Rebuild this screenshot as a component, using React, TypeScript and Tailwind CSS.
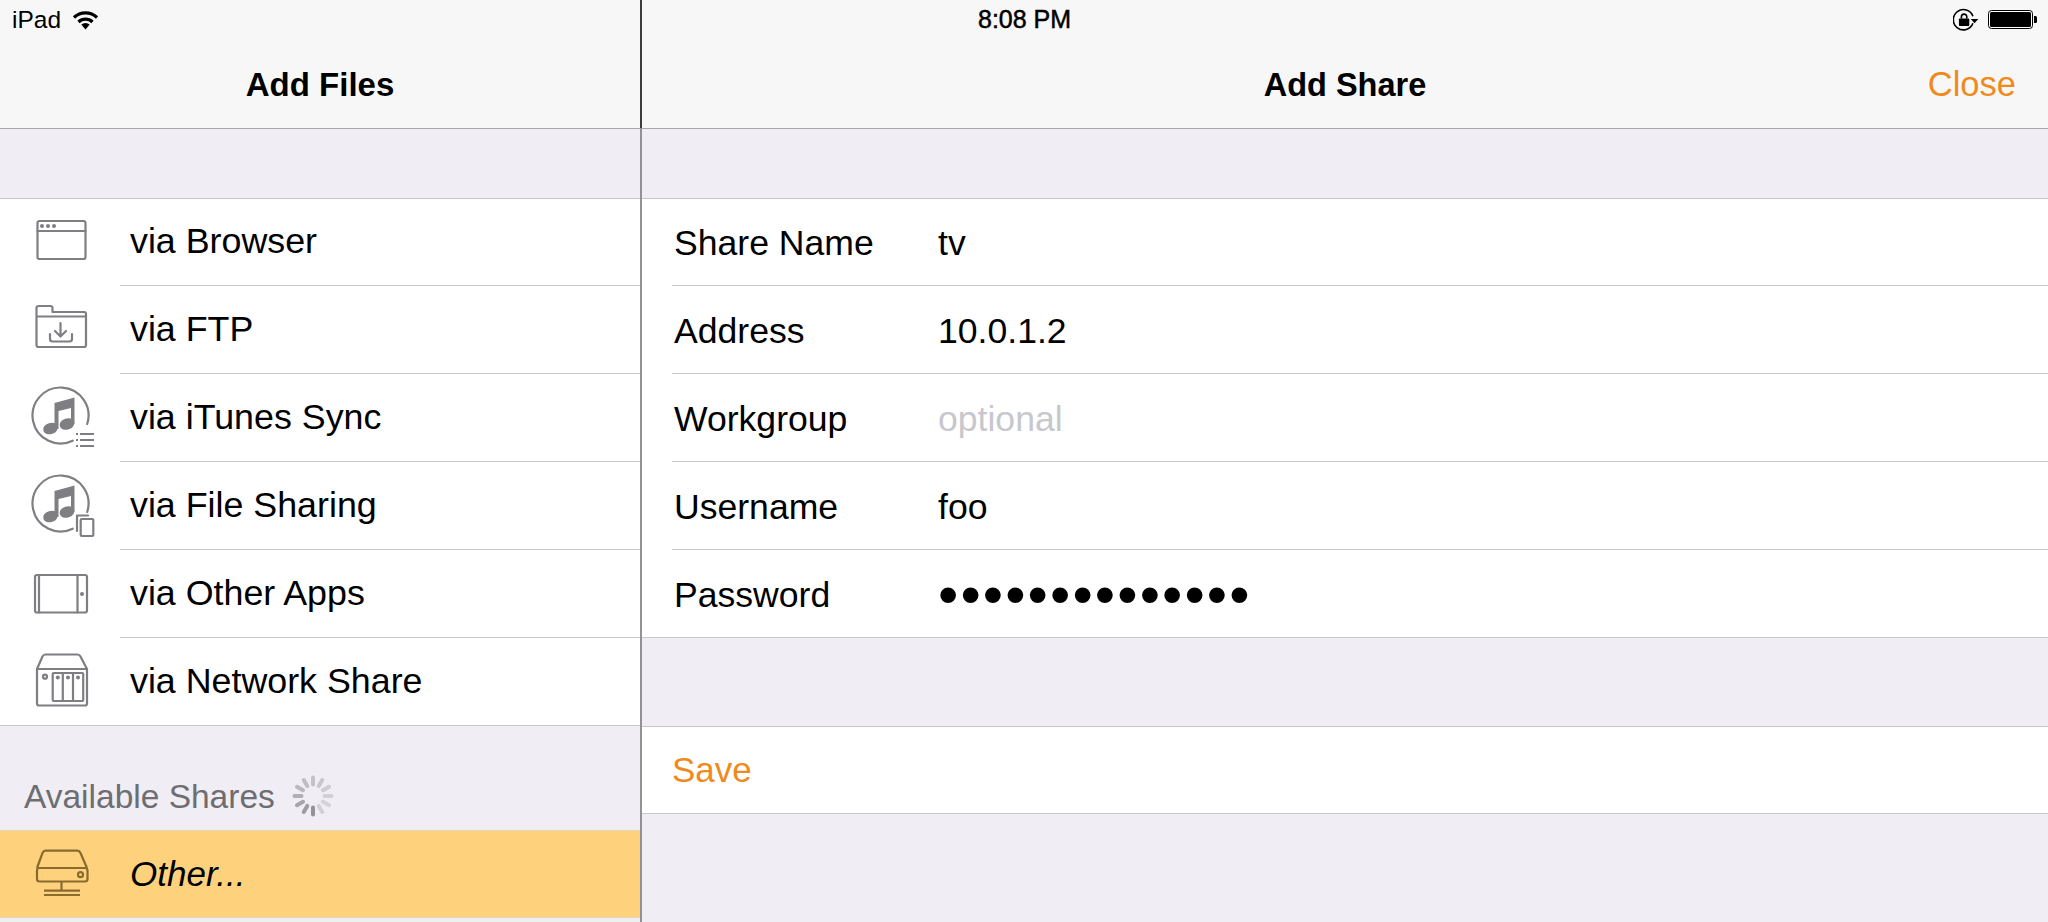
const font = "font-['Liberation_Sans',Arial,sans-serif]";

const iconStroke = {
  fill: "none",
  stroke: "#7f7f83",
  strokeWidth: 2.2,
  strokeLinecap: "round" as const,
  strokeLinejoin: "round" as const,
};

function IconBox({ children }: { children: React.ReactNode }) {
  return (
    <svg width="72" height="64" viewBox="0 0 72 64" className="shrink-0">
      {children}
    </svg>
  );
}

function BrowserIcon() {
  return (
    <IconBox>
      <g {...iconStroke}>
        <rect x="11.5" y="10" width="48" height="38" rx="2" />
        <path d="M11.5 20h48" />
      </g>
      <g fill="#7f7f83">
        <circle cx="16" cy="15" r="2" />
        <circle cx="22" cy="15" r="2" />
        <circle cx="28" cy="15" r="2" />
      </g>
    </IconBox>
  );
}

function FolderIcon() {
  return (
    <IconBox>
      <g {...iconStroke}>
        <path d="M10.5 18.5V10q0-2 2-2h12q2 0 2 2v4H58q2 0 2 2v31q0 2-2 2H12.5q-2 0-2-2V18.5H60" />
        <path d="M34.5 25v13M29 33l5.5 5.5L40 33" />
        <path d="M24 36v5q0 2.5 2.5 2.5h17q2.5 0 2.5-2.5v-5" />
      </g>
    </IconBox>
  );
}

function Note() {
  return (
    <g fill="#7f7f83">
      <path d="M28.5 17 48.5 11.5V38h-3.5V22L32.5 25V43h-4z" />
      <ellipse cx="24.5" cy="42.5" rx="7.5" ry="5.6" transform="rotate(-18 24.5 42.5)" />
      <ellipse cx="41" cy="38" rx="7.5" ry="5.6" transform="rotate(-18 41 38)" />
    </g>
  );
}

function ITunesIcon() {
  return (
    <IconBox>
      <path d="M61.2 38A28 28 0 1 0 46.7 54.7" {...iconStroke} />
      <Note />
      <g stroke="#7f7f83" strokeWidth="1.8">
        <path d="M50 48h2M50 54h2M50 60h2M54 48h14M54 54h14M54 60h14" />
      </g>
    </IconBox>
  );
}

function FileSharingIcon() {
  return (
    <IconBox>
      <path d="M61.2 38A28 28 0 1 0 46.7 54.7" {...iconStroke} />
      <Note />
      <g {...iconStroke}>
        <path d="M51 57V41.5H62" />
        <rect x="54.7" y="45" width="12.6" height="17" rx="1" />
      </g>
    </IconBox>
  );
}

function TabletIcon() {
  return (
    <IconBox>
      <g {...iconStroke}>
        <rect x="9" y="13" width="52" height="37.5" rx="2" />
        <path d="M13 13v37.5M51.5 13v37.5" />
      </g>
      <circle cx="56" cy="32" r="2" fill="#7f7f83" />
    </IconBox>
  );
}

function NasIcon() {
  return (
    <IconBox>
      <g {...iconStroke}>
        <path d="M11 19 16.5 6.5q1-2 3-2h32q2 0 3 2L61 19v34.5q0 2-2 2H13q-2 0-2-2z" />
        <path d="M11 19h50" />
        <rect x="26.7" y="23" width="30.5" height="28" rx="1" />
        <path d="M36.8 23v28M47 23v28" />
        <circle cx="19" cy="26.7" r="2" />
      </g>
      <g fill="#7f7f83">
        <circle cx="31.8" cy="27.5" r="2" />
        <circle cx="42" cy="27.5" r="2" />
        <circle cx="52" cy="27.5" r="2" />
      </g>
    </IconBox>
  );
}

function DiskIcon() {
  return (
    <IconBox>
      <g fill="none" stroke="#8a6b2f" strokeWidth="2.2" strokeLinejoin="round">
        <path d="M11 26 16.5 11q1-2.3 3-2.3h32q2 0 3 2.3L61 26" />
        <rect x="11" y="26" width="50.5" height="13.5" rx="2.5" />
        <circle cx="54.5" cy="32.7" r="2.5" />
        <path d="M35.5 39.5v9M18 48.7h36M18 53h36" />
      </g>
    </IconBox>
  );
}

function Spinner() {
  const ticks = [0.45, 0.4, 0.35, 0.3, 0.28, 0.3, 0.95, 0.85, 0.75, 0.65, 0.55, 0.5];
  return (
    <svg width="44" height="44" viewBox="-22 -22 44 44" className="mb-[4px] ml-[16px] shrink-0">
      {ticks.map((o, i) => (
        <line
          key={i}
          x1="0"
          y1="-11.5"
          x2="0"
          y2="-18.5"
          stroke="#8e8e93"
          strokeWidth="4"
          strokeLinecap="round"
          opacity={o}
          transform={`rotate(${i * 30})`}
        />
      ))}
    </svg>
  );
}

function Wifi() {
  return (
    <svg width="27" height="20" viewBox="0 0 26 20" className="ml-[11px]">
      <path d="M1.5 7.5a16.5 16.5 0 0 1 23 0" fill="none" stroke="#000" strokeWidth="3.2" />
      <path d="M6 12a10.2 10.2 0 0 1 14 0" fill="none" stroke="#000" strokeWidth="3.2" />
      <path d="M8.8 14.6a6 6 0 0 1 8.4 0L13 19.6z" fill="#000" />
    </svg>
  );
}

function RotationLock() {
  return (
    <svg width="28" height="24" viewBox="0 0 26 22">
      <path d="M18.5 14A9.4 9.4 0 1 1 18.5 7.5" fill="none" stroke="#000" strokeWidth="1.5" />
      <path d="M16.5 10h7l-3.5 4z" fill="#000" />
      <rect x="5.5" y="9.5" width="9.6" height="7" rx="0.8" fill="#000" />
      <path d="M7.8 9.5V8a2.5 2.5 0 0 1 5 0v1.5" fill="none" stroke="#000" strokeWidth="1.5" />
    </svg>
  );
}

function Battery() {
  return (
    <svg width="50" height="20" viewBox="0 0 50 20" className="ml-[7px]">
      <rect x="0.5" y="0.5" width="44" height="18" rx="3" fill="#fff" stroke="#000" />
      <rect x="2" y="2" width="41" height="15" rx="1.5" fill="#000" />
      <path d="M46 6h1.5q1.5 0 1.5 1.5v4q0 1.5-1.5 1.5H46z" fill="#000" />
    </svg>
  );
}

const files = [
  { label: "via Browser", icon: <BrowserIcon /> },
  { label: "via FTP", icon: <FolderIcon /> },
  { label: "via iTunes Sync", icon: <ITunesIcon /> },
  { label: "via File Sharing", icon: <FileSharingIcon /> },
  { label: "via Other Apps", icon: <TabletIcon /> },
  { label: "via Network Share", icon: <NasIcon /> },
];

const fields = [
  { label: "Share Name", value: "tv", tone: "text-black" },
  { label: "Address", value: "10.0.1.2", tone: "text-black" },
  { label: "Workgroup", value: "optional", tone: "text-[#c7c7cd]" },
  { label: "Username", value: "foo", tone: "text-black" },
];

export default function App() {
  return (
    <div className={`flex h-[922px] w-[2048px] overflow-hidden bg-[#f0eef4] text-black ${font}`}>
      {/* LEFT PANE */}
      <div className="flex w-[640px] shrink-0 flex-col">
        <div className="h-[129px] border-b border-[#a7a6ab] bg-[#f7f7f7]">
          <div className="flex h-[40px] items-center pl-[12px] text-[24.5px]">
            iPad
            <Wifi />
          </div>
          <div className="flex h-[88px] items-center justify-center pt-[2px] text-[33px] font-bold">Add Files</div>
        </div>
        <div className="h-[69px] shrink-0" />
        <div className="border-y border-[#c8c7cc] bg-white">
          {files.map((f, i) => (
            <div key={f.label} className={`flex ${i === 0 || i === 5 ? "h-[87px]" : "h-[88px]"}`}>
              <div className="flex w-[120px] shrink-0 items-center pl-[26px]">{f.icon}</div>
              <div className={`flex flex-1 items-center pl-[10px] text-[35.8px] ${i === 5 ? "" : "border-b border-[#c8c7cc]"}`}>
                {f.label}
              </div>
            </div>
          ))}
        </div>
        <div className="flex h-[104px] shrink-0 items-end pb-[8px] pl-[24px] text-[33.5px] text-[#6d6d72]">
          Available Shares
          <Spinner />
        </div>
        <div className="flex h-[88px] shrink-0 border-y border-[#e5d5ad] bg-[#fed27c]">
          <div className="flex w-[120px] shrink-0 items-center pl-[26px]">
            <DiskIcon />
          </div>
          <div className="flex flex-1 items-center pl-[10px] text-[35px] italic">Other...</div>
        </div>
      </div>

      {/* DIVIDER */}
      <div className="flex w-[2px] shrink-0 flex-col">
        <div className="h-[128px] bg-[#3c3c3c]" />
        <div className="flex-1 bg-[#929296]" />
      </div>

      {/* RIGHT PANE */}
      <div className="flex flex-1 flex-col">
        <div className="h-[129px] border-b border-[#a7a6ab] bg-[#f7f7f7]">
          <div className="flex h-[40px] items-center pl-[336px] pr-[10px]">
            <span className="text-[25px] [-webkit-text-stroke:0.5px_black]">8:08 PM</span>
            <div className="ml-auto flex items-center">
              <RotationLock />
              <Battery />
            </div>
          </div>
          <div className="grid h-[88px] grid-cols-[1fr_auto_1fr] items-center pt-[2px]">
            <div />
            <div className="text-[32.5px] font-bold">Add Share</div>
            <div className="pr-[32px] text-right text-[34.5px] text-[#f08a1c]">Close</div>
          </div>
        </div>
        <div className="h-[69px] shrink-0" />
        <div className="border-y border-[#c8c7cc] bg-white pl-[30px]">
          {fields.map((f, i) => (
            <div key={f.label} className={`flex items-center border-b border-[#c8c7cc] pt-[4px] text-[35.6px] ${i === 0 ? "h-[87px]" : "h-[88px]"}`}>
              <div className="w-[266px] shrink-0 pl-[2px]">{f.label}</div>
              <div className={f.tone}>{f.value}</div>
            </div>
          ))}
          <div className="flex h-[87px] items-center pt-[4px] text-[35.6px]">
            <div className="w-[266px] shrink-0 pl-[2px]">Password</div>
            <div className="mb-[4px] text-[58px] leading-none tracking-[2.1px]">••••••••••••••</div>
          </div>
        </div>
        <div className="h-[88px] shrink-0" />
        <div className="flex h-[88px] shrink-0 items-center border-y border-[#c8c7cc] bg-white pl-[30px] text-[35px] text-[#f08a1c]">
          Save
        </div>
      </div>
    </div>
  );
}
